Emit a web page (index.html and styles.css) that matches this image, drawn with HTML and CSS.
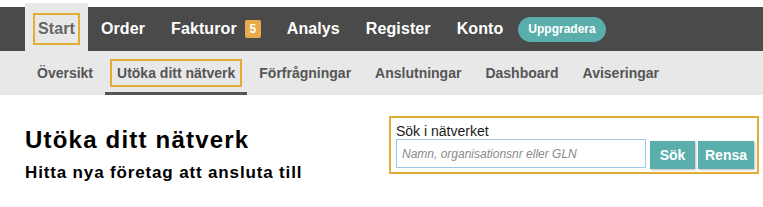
FILE: index.html
```html
<!DOCTYPE html>
<html lang="sv">
<head>
<meta charset="utf-8">
<title>Utöka ditt nätverk</title>
<link rel="stylesheet" href="styles.css">
</head>
<body>
<header class="topnav">
  <ul class="topnav-list">
    <li class="topnav-item is-active"><a class="topnav-link" href="#">Start</a></li>
    <li class="topnav-item"><a class="topnav-link" href="#">Order</a></li>
    <li class="topnav-item"><a class="topnav-link" href="#">Fakturor<span class="badge">5</span></a></li>
    <li class="topnav-item"><a class="topnav-link" href="#">Analys</a></li>
    <li class="topnav-item"><a class="topnav-link" href="#">Register</a></li>
    <li class="topnav-item"><a class="topnav-link" href="#">Konto</a></li>
    <li class="topnav-item topnav-item--pill"><a class="pill" href="#">Uppgradera</a></li>
  </ul>
</header>
<nav class="subnav">
  <ul class="subnav-list">
    <li class="subnav-item"><a class="subnav-link" href="#">Översikt</a></li>
    <li class="subnav-item is-active"><a class="subnav-link" href="#">Utöka ditt nätverk</a></li>
    <li class="subnav-item"><a class="subnav-link" href="#">Förfrågningar</a></li>
    <li class="subnav-item"><a class="subnav-link" href="#">Anslutningar</a></li>
    <li class="subnav-item"><a class="subnav-link" href="#">Dashboard</a></li>
    <li class="subnav-item"><a class="subnav-link" href="#">Aviseringar</a></li>
  </ul>
</nav>
<main class="main">
  <div class="intro">
    <h1 class="title">Utöka ditt nätverk</h1>
    <h2 class="subtitle">Hitta nya företag att ansluta till</h2>
  </div>
  <form class="search" onsubmit="return false">
    <label class="search-label" for="q">Sök i nätverket</label>
    <div class="search-row">
      <input class="search-input" id="q" type="text" placeholder="Namn, organisationsnr eller GLN">
      <button class="btn btn-search" type="submit">Sök</button>
      <button class="btn btn-clear" type="button">Rensa</button>
    </div>
  </form>
</main>
</body>
</html>
```
FILE: styles.css
```css
* { box-sizing: border-box; }

body {
  margin: 0;
  font-family: "Liberation Sans", Arial, sans-serif;
  background: #fff;
  color: #000;
}

ul { list-style: none; margin: 0; padding: 0; }
a { text-decoration: none; color: inherit; }

/* top navigation */
.topnav {
  margin-top: 7px;
  height: 44px;
  background: #4a4a4a;
}
.topnav-list {
  display: flex;
  align-items: stretch;
  height: 100%;
  padding-left: 25px;
}
.topnav-item {
  display: flex;
  align-items: center;
  padding: 0 8px;
}
.topnav-item.is-active {
  margin-top: -4px;
  padding-top: 4px;
  background: #e8e8e8;
}
.topnav-link {
  display: flex;
  align-items: center;
  border: 2px solid transparent;
  padding: 5px 3px;
  font-size: 16px;
  line-height: 18px;
  font-weight: bold;
  letter-spacing: 0.1px;
  color: #fff;
}
.topnav-item.is-active .topnav-link {
  border-color: #e0ae36;
  color: #666;
}
.badge {
  display: inline-block;
  width: 16px;
  height: 18px;
  margin-left: 8px;
  border-radius: 2px;
  background: #eaa94a;
  color: #fff;
  font-size: 12px;
  line-height: 18px;
  font-weight: bold;
  letter-spacing: 0;
  text-align: center;
}
.topnav-item--pill { padding: 0 0 0 2px; }
.pill {
  display: inline-block;
  height: 25px;
  padding: 0 10px;
  border-radius: 13px;
  background: #5aaeac;
  color: #fff;
  font-size: 12px;
  line-height: 25px;
  font-weight: bold;
}

/* sub navigation */
.subnav {
  height: 44px;
  background: #e8e8e8;
}
.subnav-list {
  display: flex;
  align-items: stretch;
  height: 100%;
  padding-left: 25px;
}
.subnav-item {
  display: flex;
  align-items: center;
  padding: 0 5px;
}
.subnav-item.is-active {
  box-shadow: inset 0 -3px 0 #555;
}
.subnav-link {
  border: 2px solid transparent;
  padding: 4px 5px;
  font-size: 14px;
  line-height: 16px;
  font-weight: bold;
  color: #555;
}
.subnav-item.is-active .subnav-link {
  border-color: #e0ae36;
}

/* main */
.main {
  display: flex;
  justify-content: space-between;
  align-items: flex-start;
  padding: 21px 4px 0 25px;
}
.title {
  margin: 10px 0 0;
  font-size: 24px;
  line-height: 28px;
  font-weight: bold;
  letter-spacing: 0.05em;
}
.subtitle {
  margin: 9px 0 0;
  font-size: 17px;
  line-height: 20px;
  font-weight: bold;
  letter-spacing: 0.05em;
}

.search {
  width: 370px;
  border: 2px solid #e0ae36;
  padding: 5px 3px 3px 5px;
}
.search-label {
  display: block;
  font-size: 14px;
  line-height: 16px;
  color: #1a1a1a;
}
.search-row {
  display: flex;
  align-items: flex-start;
}
.search-input {
  width: 250px;
  height: 29px;
  margin: 0 4px 0 0;
  padding: 0 5px;
  border: 1px solid #9fc6ec;
  border-radius: 0;
  font-family: "Liberation Sans", Arial, sans-serif;
  font-size: 12px;
  outline: none;
}
.search-input::placeholder {
  color: #8a8a8a;
  font-style: italic;
}
.btn {
  height: 28px;
  margin-top: 2px;
  border: 0;
  border-radius: 0;
  background: #5aaeac;
  color: #fff;
  font-family: "Liberation Sans", Arial, sans-serif;
  font-size: 14px;
  font-weight: bold;
  box-shadow: 1px 1px 2px rgba(0, 0, 0, 0.25);
  cursor: pointer;
}
.btn-search { width: 45px; padding: 0; margin-right: 3px; }
.btn-clear { width: 56px; padding: 0; }
```
